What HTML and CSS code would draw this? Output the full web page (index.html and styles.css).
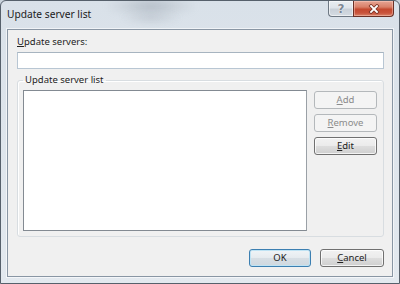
FILE: index.html
```html
<!DOCTYPE html>
<html>
<head>
<meta charset="utf-8">
<link rel="stylesheet" href="styles.css">
</head>
<body>
<div class="window">
  <div class="glass-blur"></div>
  <div class="glass-blur two"></div>
  <div class="titlebar">
    <div class="title">Update server list</div>
    <div class="caption-buttons">
      <div class="cap help"><span class="q">?</span></div>
      <div class="cap close">
        <svg width="14" height="10" viewBox="0 0 14 10">
          <path d="M4 2 L10 8 M10 2 L4 8" stroke="#7a3326" stroke-width="3.4" stroke-linecap="square" fill="none"/>
          <path d="M4 2 L10 8 M10 2 L4 8" stroke="#ffffff" stroke-width="1.8" stroke-linecap="square" fill="none"/>
        </svg>
      </div>
    </div>
  </div>
  <div class="client">
    <div class="field-label"><u>U</u>pdate servers:</div>
    <div class="textbox"></div>
    <fieldset class="group">
      <legend class="group-title">Update server list</legend>
      <div class="group-body">
        <div class="listbox"></div>
        <div class="side-buttons">
          <div class="btn disabled"><u>A</u>dd</div>
          <div class="btn disabled"><u>R</u>emove</div>
          <div class="btn"><u>E</u>dit</div>
        </div>
      </div>
    </fieldset>
    <div class="footer">
      <div class="btn default ok">OK</div>
      <div class="btn cancel"><u>C</u>ancel</div>
    </div>
  </div>
</div>
</body>
</html>
```

FILE: styles.css
```css
html, body {
  margin: 0;
  padding: 0;
  background: #c9d3dc;
}

.window {
  position: relative;
  width: 400px;
  height: 284px;
  box-sizing: border-box;
  border: 1px solid #56606b;
  border-radius: 6px 6px 0 0;
  background: linear-gradient(180deg, #d9e1e9 0%, #dde4eb 40%, #e3e9ef 100%);
  padding: 0 6px 6px 6px;
  display: flex;
  flex-direction: column;
  font-family: "Noto Sans", "DejaVu Sans", sans-serif;
  font-size: 9.5px;
  color: #222222;
  overflow: hidden;
}

.glass-blur {
  position: absolute;
  left: 105px;
  top: -6px;
  width: 90px;
  height: 22px;
  border-radius: 50%;
  background: radial-gradient(ellipse at center, rgba(110,120,135,0.35) 0%, rgba(150,160,170,0.15) 50%, rgba(200,210,220,0) 75%);
  filter: blur(3px);
}

.glass-blur.two {
  left: 120px;
  top: 10px;
  width: 60px;
  height: 14px;
  opacity: 0.6;
}

.titlebar {
  position: relative;
  height: 28px;
  display: flex;
  align-items: flex-start;
  justify-content: space-between;
}

.title {
  margin-top: 6px;
  font-size: 10.2px;
  line-height: 15px;
  color: #1b1b1b;
}

.caption-buttons {
  display: flex;
  margin-right: -1px;
}

.cap {
  height: 16px;
  box-sizing: border-box;
  border: 1px solid #6e7883;
  border-top: none;
  display: flex;
  align-items: center;
  justify-content: center;
}

.help {
  width: 25px;
  border-radius: 0 0 0 4px;
  border-right: none;
  background: linear-gradient(180deg, #e9edf1 0%, #dfe4ea 45%, #c9d0d8 55%, #d4dbe2 100%);
  box-shadow: inset 0 0 0 1px rgba(255,255,255,0.55);
}

.help .q {
  font-family: "DejaVu Sans", sans-serif;
  font-weight: bold;
  font-size: 12px;
  line-height: 12px;
  color: #7d8793;
  text-shadow: 0 0 1px #ffffff, 0 0 1px #ffffff;
}

.close {
  width: 41px;
  border-radius: 0 0 4px 0;
  background: linear-gradient(180deg, #e6a594 0%, #d98069 40%, #c4492f 55%, #c9543c 80%, #d9846a 100%);
  border-color: #6a3026;
  box-shadow: inset 0 0 0 1px rgba(255,210,200,0.45);
}

.close svg {
  display: block;
}

.client {
  flex: 1;
  border: 1px solid #8996a4;
  background: #f0f0f0;
  display: flex;
  flex-direction: column;
  padding: 5px 8px 0 9px;
  box-shadow: 0 0 0 1px rgba(255,255,255,0.6);
}

.field-label {
  line-height: 14px;
  height: 14px;
}

u {
  text-decoration: underline;
  text-underline-offset: 1px;
}

.textbox {
  margin-top: 3px;
  height: 17px;
  box-sizing: border-box;
  border: 1px solid #b8c6d3;
  border-top-color: #a7b4c0;
  background: #ffffff;
}

.group {
  margin: 4px 0 0 0;
  padding: 0 6px 5px 5px;
  border: 1px solid #d8dde1;
  border-radius: 3px;
  box-shadow: inset 1px 1px 0 #ffffff;
  min-width: 0;
}

.group-title {
  padding: 0 2px;
  margin-left: 0;
  line-height: 14px;
}

.group-body {
  margin-top: 3px;
  display: flex;
  gap: 7px;
  align-items: flex-start;
}

.listbox {
  width: 284px;
  height: 141px;
  box-sizing: border-box;
  border: 1px solid #838a92;
  border-right-color: #9aa0a6;
  background: #ffffff;
}

.side-buttons {
  margin-top: 1px;
  display: flex;
  flex-direction: column;
  gap: 5px;
}

.btn {
  box-sizing: border-box;
  height: 18px;
  border: 1px solid #707070;
  border-radius: 3px;
  background: linear-gradient(180deg, #f2f2f2 0%, #ebebeb 48%, #dddddd 52%, #cfcfcf 100%);
  box-shadow: inset 0 0 0 1px rgba(255,255,255,0.75);
  display: flex;
  align-items: center;
  justify-content: center;
  line-height: 14px;
  color: #222222;
}

.side-buttons .btn {
  width: 63px;
}

.btn.disabled {
  border-color: #b4b8bb;
  background: #f4f4f4;
  color: #8b8b8b;
  box-shadow: none;
}

.footer {
  margin-top: 12px;
  display: flex;
  justify-content: flex-end;
  gap: 9px;
}

.ok {
  width: 62px;
}

.cancel {
  width: 64px;
}

.btn.default {
  border-color: #3c7fb1;
  background: linear-gradient(180deg, #f0f4f7 0%, #e6ebef 48%, #d7dee4 52%, #cfd8df 100%);
  box-shadow: inset 0 0 0 1px #bfe3f4;
}
```
